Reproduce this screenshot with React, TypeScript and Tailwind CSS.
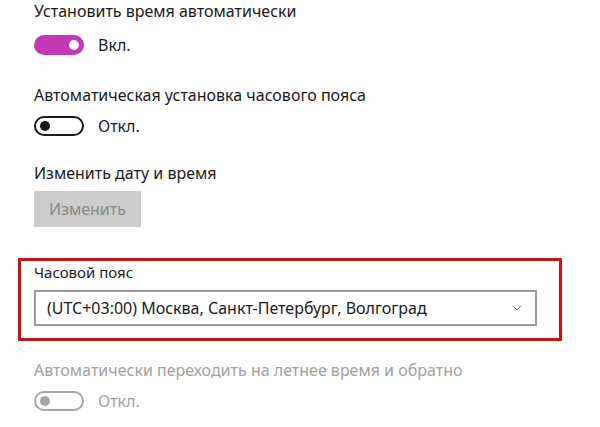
import { ChevronDown } from "lucide-react";

const Toggle = ({ state }: { state: "on" | "off" | "disabled" }) => {
  if (state === "on") {
    return (
      <div className="w-[50px] h-[20px] rounded-full bg-[#c239b3] flex items-center justify-end pr-[5px]">
        <div className="w-[10px] h-[10px] rounded-full bg-white" />
      </div>
    );
  }
  const color = state === "off" ? "border-[#1a1a1a]" : "border-[#a6a6a6]";
  const knob = state === "off" ? "bg-[#1a1a1a]" : "bg-[#a6a6a6]";
  return (
    <div className={`w-[50px] h-[20px] rounded-full border-2 ${color} flex items-center pl-[4px]`}>
      <div className={`w-[10px] h-[10px] rounded-full ${knob}`} />
    </div>
  );
};

export default function App() {
  return (
    <div className="w-[600px] h-[427px] bg-white overflow-hidden text-[#1a1a1a] font-['Noto_Sans',sans-serif]">
      <div className="pl-[34px] pt-[0px] flex flex-col items-start">
        <div className="text-[16px] leading-[22px]">Установить время автоматически</div>
        <div className="mt-[12px] flex items-center gap-[14px]">
          <Toggle state="on" />
          <span className="text-[16px] leading-[22px]">Вкл.</span>
        </div>

        <div className="mt-[28px] text-[16px] leading-[22px]">Автоматическая установка часового пояса</div>
        <div className="mt-[9px] flex items-center gap-[14px]">
          <Toggle state="off" />
          <span className="text-[16px] leading-[22px]">Откл.</span>
        </div>

        <div className="mt-[25px] text-[16px] leading-[22px]">Изменить дату и время</div>
        <button className="mt-[7px] w-[107px] h-[36px] bg-[#cccccc] text-[#8a8a8a] text-[16px] flex items-center justify-center">
          Изменить
        </button>
      </div>

      <div className="mt-[31px] ml-[18px] w-[544px] border-[3px] border-[#c4161c] pl-[13px] pt-[1px] pb-[12px]">
        <div className="text-[15px] leading-[20px]">Часовой пояс</div>
        <div className="mt-[8px] w-[503px] h-[36px] border-2 border-[#999999] flex items-center justify-between pl-[11px] pr-[10px]">
          <span className="text-[16px] leading-[22px]">(UTC+03:00) Москва, Санкт-Петербург, Волгоград</span>
          <ChevronDown className="w-[16px] h-[16px] text-[#666666]" strokeWidth={1.25} />
        </div>
      </div>

      <div className="pl-[34px] flex flex-col items-start text-[#a0a0a0]">
        <div className="mt-[18px] text-[16px] leading-[22px]">Автоматически переходить на летнее время и обратно</div>
        <div className="mt-[9px] flex items-center gap-[14px]">
          <Toggle state="disabled" />
          <span className="text-[16px] leading-[22px]">Откл.</span>
        </div>
      </div>
    </div>
  );
}
